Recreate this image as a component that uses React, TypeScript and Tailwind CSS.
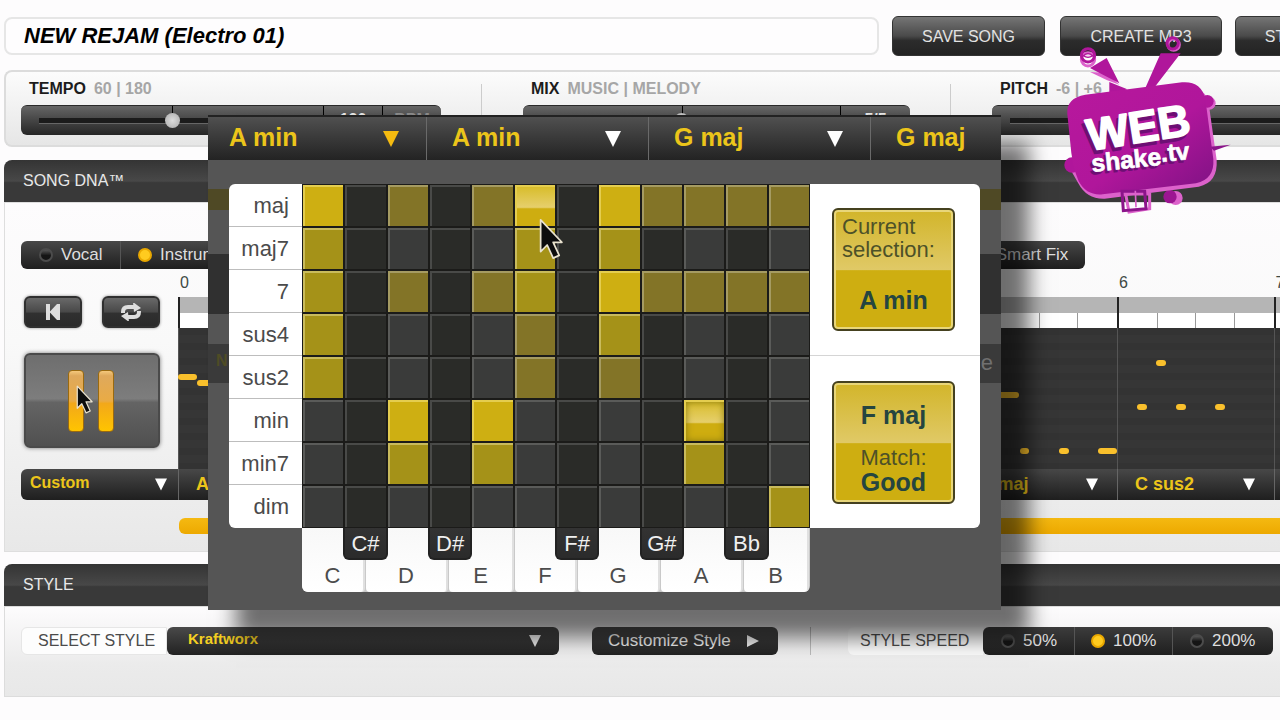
import { useState } from 'react'
import clsx from 'clsx'

const ROOTS = ['C', 'C#', 'D', 'D#', 'E', 'F', 'F#', 'G', 'G#', 'A', 'Bb', 'B']

// 0 = no match, 3 = best match
const MATCHES = [
    { type: 'maj', levels: [3, 0, 1, 0, 1, 3, 0, 3, 1, 1, 1, 1] },
    { type: 'maj7', levels: [2, 0, 0, 0, 0, 2, 0, 2, 0, 0, 0, 0] },
    { type: '7', levels: [2, 0, 1, 0, 1, 2, 0, 3, 1, 1, 1, 1] },
    { type: 'sus4', levels: [2, 0, 0, 0, 0, 1, 0, 2, 0, 0, 0, 0] },
    { type: 'sus2', levels: [2, 0, 0, 0, 0, 1, 0, 1, 0, 0, 0, 0] },
    { type: 'min', levels: [0, 0, 3, 0, 3, 0, 0, 0, 0, 3, 0, 0] },
    { type: 'min7', levels: [0, 0, 2, 0, 2, 0, 0, 0, 0, 2, 0, 0] },
    { type: 'dim', levels: [0, 0, 0, 0, 0, 0, 0, 0, 0, 0, 0, 2] },
]

const LEVEL_STYLES = [
    '',
    'bg-[#837427] border-[#a59b62]',
    'bg-[#a59218] border-[#c9bb5c]',
    'bg-[#ceaf12] border-[#e4cd4f]',
]

const MEASURES = ['A min', 'A min', 'G maj', 'G maj', 'F maj', 'G maj', 'C sus2', 'C maj']

const NOTES = [
    { left: 0, top: 46, width: 19 },
    { left: 19, top: 52, width: 16 },
    { left: 816, top: 64, width: 25 },
    { left: 842, top: 120, width: 9 },
    { left: 881, top: 120, width: 10 },
    { left: 920, top: 120, width: 19 },
    { left: 959, top: 76, width: 10 },
    { left: 978, top: 32, width: 10 },
    { left: 998, top: 76, width: 10 },
    { left: 1037, top: 76, width: 10 },
]

const WHITE_KEYS = ['C', 'D', 'E', 'F', 'G', 'A', 'B']

function Arrow({ className }) {
    return (
        <svg viewBox="0 0 18 18" className={clsx('pointer-events-none absolute', className)} fill="currentColor">
            <path d="M0 0h18L9 18z" />
        </svg>
    )
}

function Select({ label, value, wrap, field, arrow }) {
    return (
        <div className={clsx('relative', wrap)}>
            <select aria-label={label} defaultValue={value} className={clsx('h-full w-full appearance-none bg-transparent outline-none', field)}>
                <option>{value}</option>
            </select>
            {arrow && <Arrow className={arrow} />}
        </div>
    )
}

function Radio({ name, label, checked, className }) {
    return (
        <label className={clsx('flex items-center gap-2 text-[17px] text-[#dedede]', className)}>
            <input
                type="radio"
                name={name}
                defaultChecked={checked}
                className="size-[14px] appearance-none rounded-full border-2 border-[#4c4c4c] bg-[linear-gradient(#555,#151515_55%)] checked:border-[#e9a800] checked:bg-none checked:bg-[#ffcb1f]"
            />
            {label}
        </label>
    )
}

function Slider({ name, hint, min, max, value, width, values = [], valueWidth }) {
    return (
        <div className={width}>
            <label htmlFor={name} className="flex h-[18px] items-center gap-2 pl-2 text-base font-bold text-[#1c1c1c]">
                {name}
                <span className="text-[#a6a6a6]">{hint}</span>
            </label>
            <div className="mt-[7px] flex h-[30px] overflow-hidden rounded-md border-t border-[#2a2a2a] bg-linear-to-b from-[#666] to-[#262626]">
                <div className="relative flex flex-1 items-center px-[18px]">
                    <div className="absolute left-1/2 top-0 h-[8px] w-px bg-black"></div>
                    <input
                        id={name}
                        type="range"
                        min={min}
                        max={max}
                        defaultValue={value}
                        className="relative h-[6px] w-full appearance-none border-b border-[#666] bg-[#1b1b1b] [&::-webkit-slider-thumb]:size-[15px] [&::-webkit-slider-thumb]:appearance-none [&::-webkit-slider-thumb]:rounded-full [&::-webkit-slider-thumb]:bg-[radial-gradient(#ddd,#aaa)]"
                    />
                </div>
                {values.map((item) => (
                    <div key={item} className={clsx('border-l border-black pt-[5px] text-center text-base leading-[18px] font-bold text-[#e4e4e4] nth-3:text-[#8a8a8a]', valueWidth)}>{item}</div>
                ))}
            </div>
        </div>
    )
}

function TopButton({ children, className }) {
    return (
        <button type="button" className={clsx('h-10 shrink-0 rounded-md border border-[#333] bg-[linear-gradient(#757575,#4a4a4a_50%,#2c2c2c_62%,#232323)] pt-[2px] text-base text-[#e2e2e2]', className)}>
            {children}
        </button>
    )
}

function SectionTitle({ children }) {
    return (
        <h2 className="flex h-[42px] items-center rounded-tl-lg bg-[linear-gradient(#343434,#484848_50%,#393939_54%,#393939)] pl-[19px] text-base text-[#e8e8e8]">{children}</h2>
    )
}

function Pointer({ className }) {
    return (
        <svg viewBox="0 0 22 38" className={clsx('pointer-events-none absolute', className)}>
            <path d="M1.500 1.500v29l6-6 5.500 12 5.500-2.500-5.500-12h8z" fill="#0d0d0d" stroke="#e9e2cf" strokeWidth="1.600" strokeLinejoin="round" />
        </svg>
    )
}

function Logo() {
    return (
        <svg viewBox="600 99 525 549" className="pointer-events-none absolute right-[45px] top-[33px] z-30 h-[183px] w-[175px]">
            <defs>
                <linearGradient id="tv" x1="0" y1="0" x2="1" y2="1">
                    <stop offset="0" stopColor="#b8189d" />
                    <stop offset="0.55" stopColor="#b0169b" />
                    <stop offset="1" stopColor="#7d1283" />
                </linearGradient>
            </defs>
            <g fill="none" stroke="#dc62cb" strokeWidth="9">
                <circle cx="684" cy="178" r="20" />
                <circle cx="941" cy="134" r="17" />
                <path d="M797 582h72v44l-62 10z" />
            </g>
            <path d="M690 216l50 24 38 14-40-36z" fill="#dc62cb" />
            <path d="M690 204l50-30 38 76zM902 160h60l-80 104h-26z" fill="#b0169b" />
            <g fill="none" stroke="#b0169b" strokeWidth="9">
                <circle cx="684" cy="166" r="20" />
                <circle cx="938" cy="130" r="17" />
            </g>
            <path d="M670 167q14-12 28 0q-14 10-28 0z" fill="#f3d8ef" stroke="#b0169b" strokeWidth="4" />
            <circle cx="947" cy="594" r="21" fill="#dc62cb" />
            <circle cx="930" cy="590" r="20" fill="#9c1592" />
            <path d="M692 295L968 262Q1036 256 1046 310L1070 480Q1074 548 1016 560L734 596Q680 598 654 548L632 510z" fill="#dc62cb" />
            <circle cx="1048" cy="310" r="19" fill="#dc62cb" />
            <circle cx="1042" cy="304" r="19" fill="#b0169b" />
            <circle cx="636" cy="495" r="23" fill="#b0169b" />
            <path d="M1050 440l62-6-50 18z" fill="#8b148a" />
            <path d="M748 246l54 22-54 18z" fill="#b0169b" />
            <path d="M676 284L966 247Q1022 242 1036 296L1060 478Q1064 538 1008 550L728 583Q680 588 656 544Q636 500 630 420L622 342Q618 294 676 284z" fill="url(#tv)" />
            <path d="M786 574h68l4 52-68 6z" fill="none" stroke="#8b148a" strokeWidth="9" />
            <path d="M826 572l2 50" stroke="#dc62cb" strokeWidth="5" />
            <g fontFamily="'Liberation Sans', Arial, sans-serif" fontWeight="700">
                <g fill="#6d0f74" stroke="#6d0f74" strokeLinejoin="round">
                    <text x="680" y="464" fontSize="134" strokeWidth="5" transform="rotate(-9 680 464)">WEB</text>
                    <text x="690" y="524" fontSize="74" strokeWidth="2" transform="rotate(-6 690 524)">shake<tspan dy="-8">.tv</tspan></text>
                </g>
                <g fill="#fff" stroke="#fff" strokeLinejoin="round">
                    <text x="688" y="452" fontSize="134" strokeWidth="5" transform="rotate(-9 688 452)">WEB</text>
                    <text x="697" y="516" fontSize="74" strokeWidth="2" transform="rotate(-6 697 516)">shake<tspan dy="-8">.tv</tspan></text>
                </g>
            </g>
        </svg>
    )
}

function ChordGrid({ selected, onSelect }) {
    return (
        <div className="w-[508px] shrink-0">
            <div className="grid h-[344px] grid-cols-12 grid-rows-8 gap-[2px] bg-[#1b1b19] p-px">
                {MATCHES.map(({ type, levels }) =>
                    levels.map((level, i) => {
                        const chord = `${ROOTS[i]} ${type}`
                        const isBlack = ROOTS[i].length > 1
                        return (
                            <button
                                key={chord}
                                type="button"
                                aria-label={chord}
                                onClick={() => onSelect(chord)}
                                className={clsx(
                                    'border-t-2 border-l-2',
                                    level === 0 && (isBlack ? 'border-[#494a48] bg-[#2a2b28]' : 'border-[#5a5b59] bg-[#3a3b3a]'),
                                    LEVEL_STYLES[level],
                                    chord === 'F maj' && 'bg-[linear-gradient(#d8bd2c,#e6cf6c_52%,#cead10_56%)]',
                                    chord === selected && 'bg-[linear-gradient(#d8bd2c,#e6cf6c_52%,#cead10_56%)] shadow-[inset_0_0_7px_#8b7a10]',
                                )}
                            />
                        )
                    })
                )}
            </div>
            <div className="relative">
                <div className="grid h-16 grid-cols-[64fr_83fr_66fr_63fr_83fr_83fr_66fr] overflow-hidden rounded-b-md bg-[#c9c9c9]">
                    {WHITE_KEYS.map((key) => (
                        <button key={key} type="button" className="mr-px flex items-end justify-center rounded-b-sm border-r-2 border-[#e0e0e0] bg-linear-to-b from-[#f8f8f8] to-white pb-[5px] text-[22px] leading-[22px] text-[#4c4c4c]">
                            {key}
                        </button>
                    ))}
                </div>
                <div className="absolute inset-x-0 top-0 grid grid-cols-12">
                    {ROOTS.map((root) => (
                        root.length > 1
                            ? <button key={root} type="button" className="-mx-px h-8 rounded-b-md border-2 border-t-0 border-[#222] bg-linear-to-b from-[#333] to-[#2b2b2b] text-[22px] leading-[32px] text-[#f0f0f0]">{root}</button>
                            : <span key={root}></span>
                    ))}
                </div>
            </div>
        </div>
    )
}

function ChordPopover() {
    const [selected, setSelected] = useState('A min')

    return (
        <div className="absolute left-[208px] top-[115px] z-20 h-[495px] w-[793px] bg-[#555] shadow-[28px_28px_20px_rgba(0,0,0,0.56)]">
            <div className="grid h-[45px] grid-cols-[219px_222px_222px_1fr] border-t-2 border-[#222] bg-linear-to-b from-[#505050] to-[#232323]">
                {['A min', 'A min', 'G maj', 'G maj'].map((chord, i) => (
                    <Select
                        key={i}
                        label={`Chord ${i + 1}`}
                        value={chord}
                        wrap={clsx(i < 3 && 'border-r border-[#6a6a6a]')}
                        field={clsx('pb-[2px] text-[25px] font-bold text-[#ecc51a]', i === 0 ? 'pl-[21px]' : 'pl-[25px]')}
                        arrow={i < 3 && clsx('right-[27px] top-[13px] h-[18px] w-4', i === 0 ? 'text-[#f5bb10]' : 'text-white')}
                    />
                ))}
            </div>
            <div className="relative mt-6 flex bg-[linear-gradient(#555_5px,#4f4925_5px,#4f4925_26px,#555_26px,#555_70px,#303030_70px,#303030_130px,#555_130px,#555_160px,#3a3a3a_160px,#3a3a3a_199px,#555_199px)] px-[21px]">
                <div className="grid h-[344px] w-[73px] shrink-0 grid-rows-8 divide-y divide-[#bdbdbd] overflow-hidden rounded-l-md bg-white">
                    {MATCHES.map(({ type }) => (
                        <div key={type} className="flex items-center justify-end pr-[13px] text-[22px] text-[#4b4b4b]">{type}</div>
                    ))}
                </div>
                <ChordGrid selected={selected} onSelect={setSelected} />
                <div className="grid h-[344px] flex-1 grid-rows-2 divide-y divide-[#d5d5d5] rounded-r-md bg-white">
                    <div className="flex items-center justify-center pr-[3px]">
                        <div className="flex h-[123px] w-[123px] flex-col rounded-md border-2 border-[#45411f] bg-[linear-gradient(#d2b52a,#e0c966_50%,#ceae11_51%)] shadow-[inset_0_0_0_2px_#e8d67a]">
                            <p className="h-1/2 pl-2 pt-[5px] text-[22px] leading-[23px] text-[#4d5128]">Current<br />selection:</p>
                            <p className="flex h-1/2 items-center justify-center pt-[2px] text-[25px] font-bold text-[#254540]">{selected}</p>
                        </div>
                    </div>
                    <div className="flex items-center justify-center pr-[3px]">
                        <div className="h-[123px] w-[123px] rounded-md border-2 border-[#45411f] bg-[linear-gradient(#d2b52a,#e0c966_50%,#ceae11_51%)] text-center text-[25px] leading-[25px] font-bold text-[#254540] shadow-[inset_0_0_0_2px_#e8d67a]">
                            <p className="pt-5">F maj</p>
                            <p className="pt-[17px] text-[22px] font-normal text-[#4d5128]">Match:</p>
                            <p>Good</p>
                        </div>
                    </div>
                </div>
                <span aria-hidden="true" className="absolute right-2 top-[166px] text-[22px] leading-[26px] text-[#707070]">e</span>
                <span aria-hidden="true" className="absolute left-2 top-[166px] text-base leading-[22px] font-bold text-[#4f4c25]">N</span>
                <Pointer className="left-[331px] top-[34px] h-[42px] w-6" />
            </div>
        </div>
    )
}

function Transport() {
    return (
        <div className="flex w-[157px] shrink-0 flex-col pt-[27px]">
            <div className="flex gap-5 pl-[3px]">
                <button type="button" aria-label="Rewind" className="flex h-8 w-[58px] items-center justify-center rounded-md border-2 border-[#303030] bg-[linear-gradient(#696969,#484848_50%,#303030_54%,#2a2a2a)] shadow-[0_0_3px_#888]">
                    <svg viewBox="0 0 16 16" className="size-4" fill="#ddd">
                        <path d="M1 0h4v16H1zM4.500 8L12 0h3v16h-3z" />
                    </svg>
                </button>
                <button type="button" aria-label="Loop" className="flex h-8 w-[58px] items-center justify-center rounded-md border-2 border-[#303030] bg-[linear-gradient(#696969,#484848_50%,#303030_54%,#2a2a2a)] shadow-[0_0_3px_#888]">
                    <svg viewBox="0 0 22 18" className="h-[18px] w-[22px]" fill="none" stroke="#ddd" strokeWidth="4">
                        <path d="M3 10V9q0-5 5-5h7M19 8v1q0 5-5 5H7" />
                        <path d="M13-1l8 6-7 4zM9 19l-8-6 7-4z" fill="#ddd" stroke="none" />
                    </svg>
                </button>
            </div>
            <button type="button" aria-label="Pause" className="relative mt-[25px] ml-[3px] flex h-[95px] w-[136px] items-center justify-center gap-[14px] rounded-md border-2 border-[#4a4a4a] bg-[linear-gradient(#6e6e6e,#7d7d7d_48%,#646464_52%,#505050)] pr-[3px] shadow-[0_0_4px_#777]">
                <span className="h-[62px] w-4 rounded-sm border border-[#9a6a10] bg-[linear-gradient(#f4c87c,#dfa95c_8%,#e9ab45_50%,#f2a81a_54%,#ffc400)]"></span>
                <span className="h-[62px] w-4 rounded-sm border border-[#9a6a10] bg-[linear-gradient(#f4c87c,#dfa95c_8%,#e9ab45_50%,#f2a81a_54%,#ffc400)]"></span>
                <Pointer className="left-[50px] top-[30px] h-[29px] w-[17px]" />
            </button>
            <Select
                label="Chord set"
                value="Custom"
                wrap="mt-[21px] h-[31px] rounded-l-md bg-linear-to-b from-[#484848] to-[#1f1f1f]"
                field="pl-[9px] pb-1 text-base font-bold text-[#ecc51a]"
                arrow="right-[11px] top-[9px] h-[13px] w-3 text-white"
            />
        </div>
    )
}

function Timeline() {
    return (
        <div className="min-w-0 flex-1 overflow-hidden">
            <div className="relative grid w-[1252px] grid-cols-8">
                {MEASURES.map((chord, i) => (
                    <div key={i}>
                        <div className="h-7 pl-[2px] text-base leading-[28px] text-[#3f4a45]">{i}</div>
                        <div className="h-4 border-l-2 border-[#222] bg-[#b5b5b5]"></div>
                        <div className="grid h-[15px] grid-cols-4 divide-x divide-[#999] border-l-2 border-[#222] bg-white">
                            <span></span>
                            <span></span>
                            <span></span>
                            <span></span>
                        </div>
                        <div className="h-[141px] border-l border-[#555] bg-[repeating-linear-gradient(#333_0_7px,#363636_7px_15px)]"></div>
                        <Select
                            label={`Measure ${i}`}
                            value={chord}
                            wrap="h-[31px] border-l border-[#666] bg-linear-to-b from-[#484848] to-[#1f1f1f]"
                            field="pl-[17px] pb-[2px] text-lg font-bold text-[#ecc51a]"
                            arrow="right-[19px] top-[9px] h-[13px] w-3 text-white"
                        />
                    </div>
                ))}
                {NOTES.map((note) => (
                    <span
                        key={`${note.left}-${note.top}`}
                        className="absolute h-[6px] rounded-sm bg-[#f9c02c]"
                        style={{ left: note.left, top: note.top + 59, width: note.width }}
                    ></span>
                ))}
            </div>
        </div>
    )
}

export default function App() {
    return (
        <div className="relative min-h-screen overflow-hidden bg-[#fdfcfd] pt-4 pl-1 font-['Liberation_Sans',Arial,sans-serif]">
            <header className="flex items-center">
                <input
                    aria-label="Song name"
                    defaultValue="NEW REJAM (Electro 01)"
                    className="mr-[13px] h-[38px] min-w-0 flex-1 rounded-lg border-2 border-[#e6e6e6] bg-[#fefdfe] px-[18px] text-[22px] font-bold text-black italic outline-none"
                />
                <TopButton className="mr-[15px] w-[153px]">SAVE SONG</TopButton>
                <TopButton className="mr-[13px] w-[162px]">CREATE MP3</TopButton>
                <TopButton className="-mr-[75px] w-[120px]">STUDIO</TopButton>
            </header>

            <section className="mt-[14px] flex h-[77px] rounded-l-lg border-2 border-r-0 border-[#dcdcdc] bg-linear-to-b from-[#fcfcfc] to-[#e6e6e6] pt-2 pl-[15px]">
                <Slider name="TEMPO" hint="60 | 180" min={60} max={180} value={120} width="w-[420px]" values={['120', 'BPM']} valueWidth="w-[59px]" />
                <div className="mt-1 ml-10 w-px bg-[#ccc]"></div>
                <Slider name="MIX" hint="MUSIC | MELODY" min={0} max={100} value={50} width="ml-[41px] w-[387px]" values={['5/5']} valueWidth="w-[70px]" />
                <div className="mt-1 ml-10 w-px bg-[#ccc]"></div>
                <Slider name="PITCH" hint="-6 | +6" min={-6} max={6} value={0} width="ml-[41px] -mr-6 flex-1" />
            </section>

            <section className="mt-[13px]">
                <SectionTitle>SONG DNA™</SectionTitle>
                <div className="border border-r-0 border-[#dedede] bg-[linear-gradient(#fdfcfd,#f9f9f9_40%,#e8e8e8)] pt-[38px] pb-[17px] pl-4">
                    <div className="flex">
                        <div className="flex h-7 rounded-md bg-linear-to-b from-[#484848] to-[#1f1f1f]">
                            <Radio name="part" label="Vocal" className="w-[100px] border-r border-[#555] pl-[18px]" />
                            <Radio name="part" label="Instrumental" checked className="px-[17px]" />
                        </div>
                        <button type="button" className="mr-[195px] ml-auto h-7 w-[106px] rounded-md bg-linear-to-b from-[#484848] to-[#1f1f1f] text-[17px] text-[#dedede]">Smart Fix</button>
                    </div>
                    <div className="flex">
                        <Transport />
                        <Timeline />
                    </div>
                    <div className="mt-[18px] ml-[158px] h-4 rounded-l-md bg-linear-to-b from-[#f5b911] to-[#eda900]"></div>
                </div>
            </section>

            <section className="mt-3">
                <SectionTitle>STYLE</SectionTitle>
                <div className="flex h-[91px] border border-r-0 border-[#dcdcdc] bg-[linear-gradient(#fdfcfd,#ebebeb_65%,#e8e8e8)] pt-5 pr-[7px] pl-4">
                    <label htmlFor="style" className="flex h-7 w-[146px] shrink-0 items-center rounded-l-md border border-[#e6e6e6] bg-[#fdfdfd] pl-4 text-base text-[#4b4b4b]">SELECT STYLE</label>
                    <div className="relative h-7 flex-1 rounded-md bg-linear-to-b from-[#4a4a4a] to-[#222]">
                        <select id="style" className="h-full w-full appearance-none pb-1 pl-[21px] text-[15px] font-bold text-[#f5d022] outline-none">
                            <option>Kraftworx</option>
                        </select>
                        <Arrow className="top-[7px] right-[18px] h-[14px] w-3 text-[#eee]" />
                    </div>
                    <button type="button" className="ml-[33px] flex h-7 w-[186px] items-center rounded-md bg-linear-to-b from-[#4a4a4a] to-[#222] pl-4 text-[17px] text-[#f2f2f2]">
                        Customize Style
                        <svg viewBox="0 0 12 12" className="ml-4 size-3" fill="currentColor">
                            <path d="M0 0l12 6-12 6z" />
                        </svg>
                    </button>
                    <div className="ml-8 h-7 w-px bg-[#bbb]"></div>
                    <div className="ml-[37px] flex h-7 w-[135px] items-center rounded-l-md bg-[#fbfbfb] pl-3 text-base text-[#4b4b4b]">STYLE SPEED</div>
                    <div className="flex h-7 w-[290px] divide-x divide-[#555] rounded-md bg-linear-to-b from-[#3c3c3c] to-[#1f1f1f]">
                        <Radio name="speed" label="50%" className="w-[92px] pl-[18px]" />
                        <Radio name="speed" label="100%" checked className="w-[98px] pl-4" />
                        <Radio name="speed" label="200%" className="w-[100px] pl-[17px]" />
                    </div>
                </div>
            </section>

            <ChordPopover />
            <Logo />
        </div>
    )
}
